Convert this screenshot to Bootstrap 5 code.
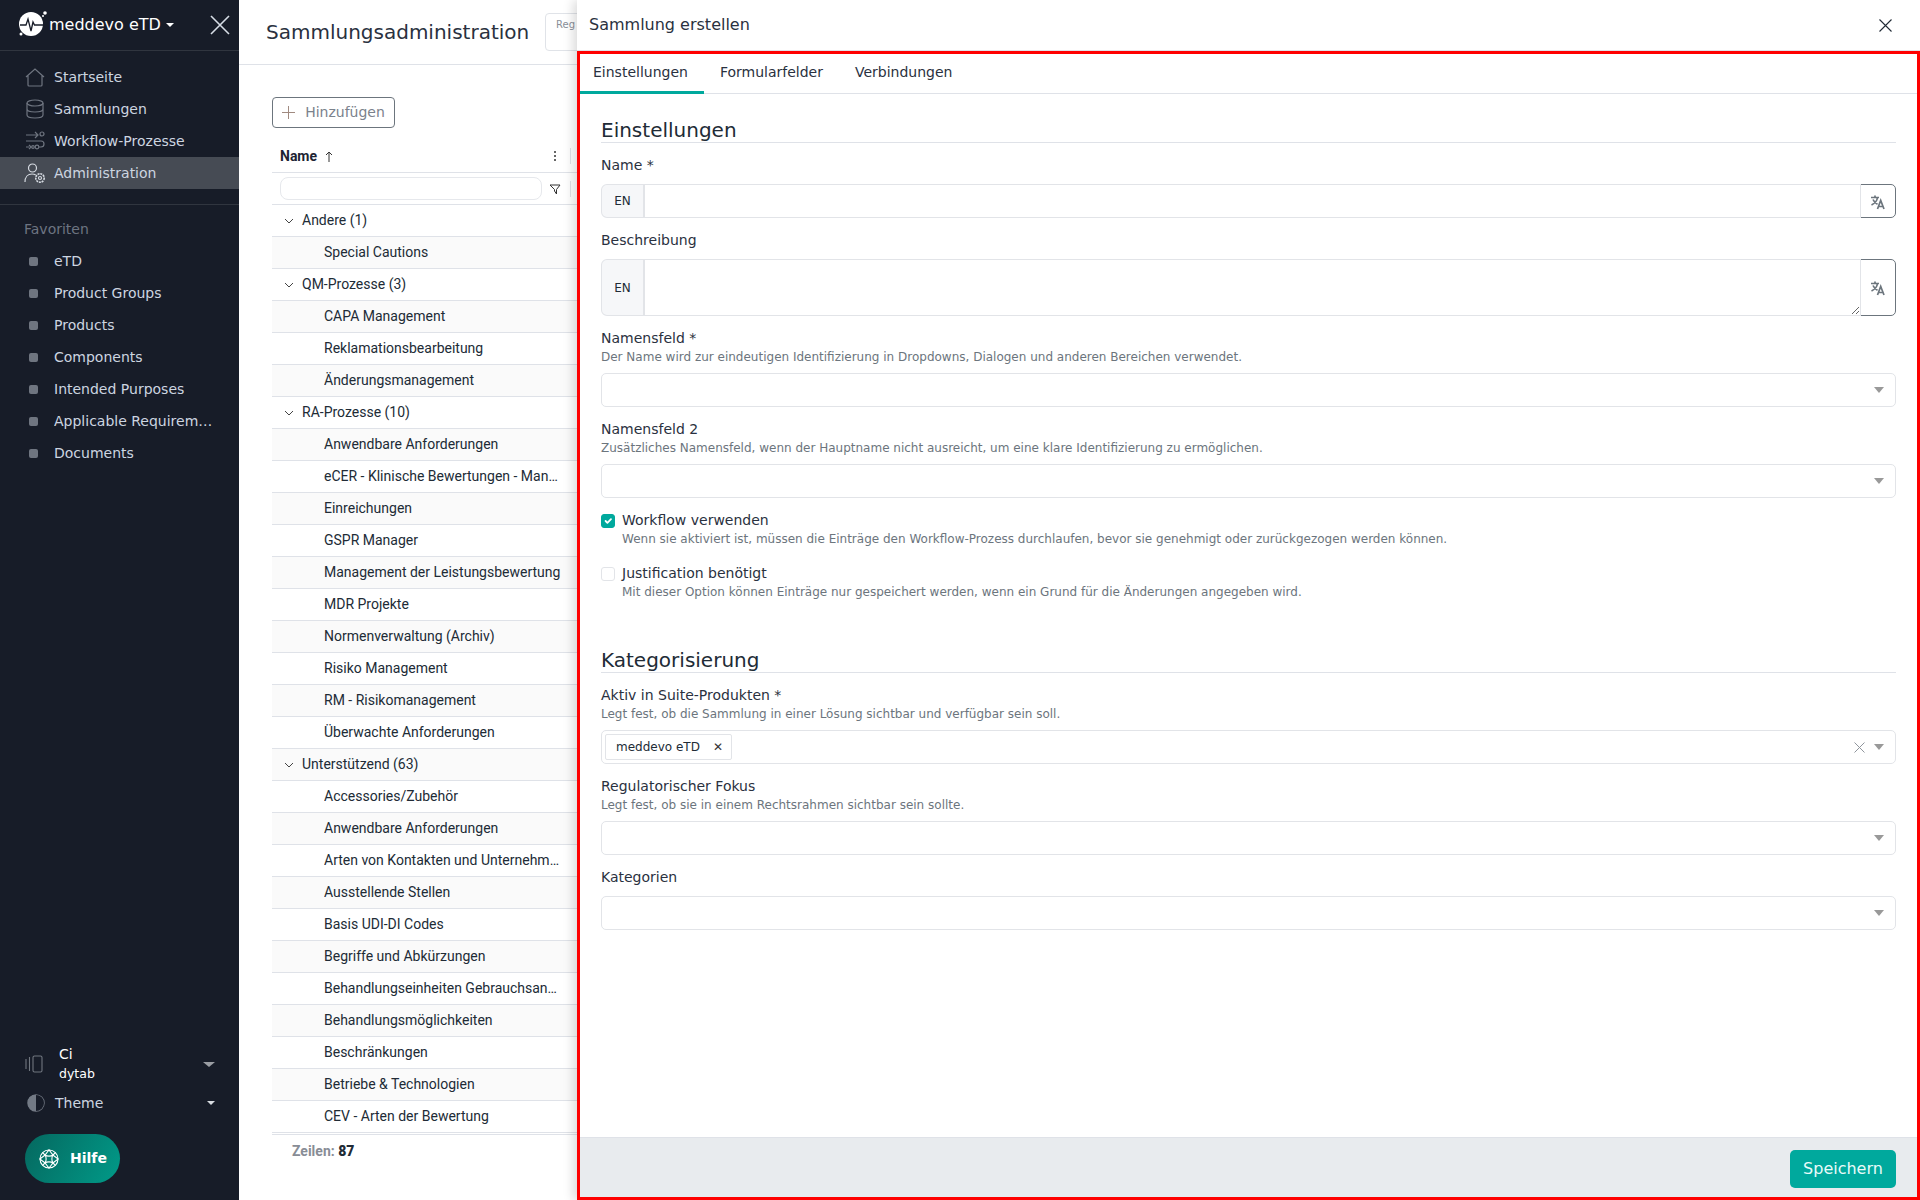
<!DOCTYPE html>
<html lang="de">
<head>
<meta charset="utf-8">
<title>Sammlungsadministration</title>
<link href="https://cdn.jsdelivr.net/npm/bootstrap@5.3.0/dist/css/bootstrap.min.css" rel="stylesheet">
<style>
html,body{height:1200px;overflow:hidden}
body{font-family:"DejaVu Sans",sans-serif;font-size:14px;color:#212b36;background:#fff}
.shell{height:1200px;position:relative;overflow:hidden}
.side{width:239px;flex:none;background:#171c28;color:#cdd5e0;height:1200px}
.brandbar{height:51px;border-bottom:1px solid #30353f;padding-left:19px;padding-right:9px}
.brandname{font-size:16px;color:#fff}
.caretw{display:inline-block;border-left:4px solid transparent;border-right:4px solid transparent;border-top:4px solid #fff;margin-left:5px;vertical-align:3px}
.mainnav{padding-top:10px;padding-bottom:15px;border-bottom:1px solid #30353f}
.navrow{height:32px;padding-left:24px;gap:8px;color:#cdd5e0;font-size:14px}
.navrow.sel{background:#464b54}
.navrow svg{width:22px;height:22px;flex:none}
.favh{color:#6d7481;font-size:14px;padding:16px 0 7px 24px;line-height:17px}
.favrow{height:32px;padding-left:29px;gap:11px;color:#cdd5e0;font-size:14px}
.sq{width:9px;height:9px;background:#6f7580;border-radius:2px;flex:none;margin-right:5px}
.favtext{width:160px}
.ci{padding-left:25px;padding-right:24px;height:44px;margin-bottom:2px;margin-top:-2px}
.ci b{font-weight:400;color:#fff;font-size:14px;line-height:19px;display:block}
.ci b+b{font-size:12.500px}
.cicaret{border-left:6px solid transparent;border-right:6px solid transparent;border-top:5px solid #9a9da3}
.cicaret.lite{border-top-color:#d7dbe0;border-left-width:4px;border-right-width:4px;border-top-width:4px}
.theme{padding-left:27px;padding-right:24px;height:30px;font-size:14px;gap:10px}
.helpbtn{width:95px;height:49px;margin:16px 0 17px 25px;border-radius:25px;background:linear-gradient(120deg,#05685f,#019a88);color:#fff;font-weight:700;font-size:14px;border:0;gap:11px;padding:0 0 0 14px}
.content{flex:1;min-width:0}
.pagehead{height:65px;border-bottom:1px solid #dfe2e8;padding-left:27px}
.pagehead h1{font-size:20px;font-weight:400;margin:0;width:279px;color:#2a3140;white-space:nowrap}
.regbox{width:200px;height:38px;border:1px solid #e0e3e8;border-radius:4px;font-size:10px;color:#8a8f98;padding:3px 0 0 10px;margin-top:-1px;white-space:nowrap;overflow:hidden}
.work{padding:32px 0 0 33px}
.addbtn{width:123px;height:31px;padding:0;border:1px solid #6c757d;border-radius:4px;color:#7b828c;font-size:14px;background:#fff;gap:10px}
.grid{width:305px;font-family:Roboto,sans-serif;font-size:14px;margin-top:12px;color:#212b36}
.ghead{height:33px;border-bottom:1px solid #dfe2e8;font-weight:700;padding-left:8px;font-size:14px;color:#1d2433}
.gfilter{height:32px;border-bottom:1px solid #dfe2e8;padding-left:8px}
.gfilter i{display:block;width:262px;height:23px;border:1px solid #e6e8ec;border-radius:8px}
.vsep{width:1px;height:16px;background:#dfe2e8;margin:0 6px 0 9px}
.gicon{margin-left:auto}
.grow{height:32px;border-bottom:1px solid #dfe2e8;padding-left:52px}
.grow:nth-child(even){background:#fafafa}
.grow span{width:238px}
.grow.grp{padding-left:12px;gap:8px}
.gtable{height:928px;overflow:hidden}
.gfoot{font-size:14px;font-weight:700;color:#888d96;padding:6px 0 0 20px;margin-top:1px;border-top:1px solid #dfe2e8}
.gfoot b{color:#212b36}
.panel{position:absolute;left:577px;top:0;right:0;bottom:0;background:#fff;box-shadow:-4px 0 10px rgba(0,0,0,.14)}
.panelhead{height:51px;padding:0 28px 0 12px;font-size:16px;color:#2a3140;border-bottom:1px solid #dfe2e8}
.panelframe{border:3px solid #f00;height:1149px}
.tabsbar{height:40px;border-bottom:1px solid #dfe2e8}
.tabsbar .nav-link{color:#2a3140;font-size:14px;padding:0 16px;height:40px;line-height:37px;border:0;border-radius:0;background:none}
.tabsbar .nav-item:first-child .nav-link{padding-left:13px}
.tabsbar .nav-link.active{border-bottom:3px solid #00a99d;color:#2a3140}
.formarea{padding:23px 21px 0 21px}
.sec{font-size:20px;font-weight:400;color:#212b36;line-height:27px;border-bottom:1px solid #dfe2e8;margin:0 0 13px;padding-bottom:0;height:26px}
.seccat{margin-top:46px}
.lbl{font-size:14px;color:#2a3140;line-height:18px;margin:0 0 10px;display:block}
.lbl.withhelp{margin-bottom:1px}
.hint{font-size:12px;color:#6c757d;line-height:18px;margin-bottom:7px}
.langgrp{margin-bottom:13px}
.langgrp .input-group-text{width:44px;padding:0;justify-content:center;font-size:12px;background:#f6f7f9;border-color:#e2e4e8;border-width:1px 2px 1px 1px;color:#212b36;border-radius:6px 0 0 6px}
.langgrp .form-control{height:34px;border-color:#e2e4e8;border-radius:0;box-shadow:none}
.langgrp textarea.form-control{height:57px}
.langbtn{width:36px;padding:0;border:1px solid #6c757d;border-radius:0 5px 5px 0;background:#fff;margin-left:-1px}
.sel2{height:34px;border-color:#e2e4e8;border-radius:5px;margin-bottom:13px;background-image:url("data:image/svg+xml,%3Csvg xmlns='http://www.w3.org/2000/svg' width='10' height='6'%3E%3Cpath d='M0 0h10L5 6z' fill='%23999'/%3E%3C/svg%3E");background-size:10px 6px;background-position:right 11px center}
.chk{margin-bottom:0;padding-left:21px;min-height:0}
.chk .form-check-input{width:14px;height:14px;margin-top:3px;margin-left:-21px;border-color:#e2e4e8;border-radius:3px}
.chk .form-check-input:checked{background-color:#00a99d;border-color:#00a99d}
.chk label{font-size:14px;color:#2a3140;line-height:18px;display:block}
.chk .hint{margin-bottom:16px;margin-top:1px}
.multi{height:34px;border:1px solid #e2e4e8;border-radius:5px;padding:0 11px 0 3px;margin-bottom:13px}
.chip{border:1px solid #e2e4e8;border-radius:2px;height:26px;padding:0 8px 0 10px;font-size:12px;gap:13px}
.chipx{font-size:12px;line-height:1;color:#333}
.multiend{margin-left:auto;gap:9px}
.tri{border-left:5px solid transparent;border-right:5px solid transparent;border-top:6px solid #999;display:block}
.panelfoot{position:absolute;left:3px;right:3px;bottom:3px;height:60px;background:#e8ebee;border-top:1px solid #dfe2e8;padding:3px 21px 0 0}
.savebtn{width:106px;height:38px;background:#00a99d;border:0;color:#e8fbf9;font-size:16px;border-radius:5px;padding:0}
</style>
</head>
<body>
<div class="shell d-flex">
  <aside class="side d-flex flex-column">
    <div class="brandbar d-flex align-items-center justify-content-between">
      <div class="d-flex align-items-center">
        <svg width="30" height="30" viewBox="0 0 30 30"><circle cx="12" cy="14" r="12" fill="#fff"/><path d="M1 15h6l2-6 3 12 2-9 1.500 3h9" fill="none" stroke="#171c28" stroke-width="1.300"/><circle cx="26" cy="3" r="1.800" fill="#fff"/><circle cx="2" cy="24" r="1.500" fill="#fff"/><circle cx="24" cy="6" r="1" fill="#fff"/></svg>
        <span class="brandname">meddevo eTD<span class="caretw"></span></span>
      </div>
      <svg width="20" height="20" viewBox="0 0 20 20"><path d="M1 1l18 18M19 1L1 19" stroke="#d7dde6" stroke-width="1.600" fill="none"/></svg>
    </div>
    <div class="mainnav">
      <div class="navrow d-flex align-items-center"><svg viewBox="0 0 22 22" fill="none" stroke="#6f7580" stroke-width="1.200"><path d="M2 11l9-8 9 8M4 9v10a1 1 0 0 0 1 1h12a1 1 0 0 0 1-1V9"/></svg>Startseite</div>
      <div class="navrow d-flex align-items-center"><svg viewBox="0 0 22 22" fill="none" stroke="#6f7580" stroke-width="1.200"><ellipse cx="11" cy="5" rx="8" ry="3"/><path d="M3 5v12c0 1.700 3.600 3 8 3s8-1.300 8-3V5M3 11c0 1.700 3.600 3 8 3s8-1.300 8-3"/></svg>Sammlungen</div>
      <div class="navrow d-flex align-items-center"><svg viewBox="0 0 22 22" fill="none" stroke="#6f7580" stroke-width="1.200"><path d="M2 5h12M11 2l3 3-3 3M2 17h3M5 15l2 2-2 2"/><circle cx="18" cy="4" r="2"/><path d="M2 11h15a3 3 0 0 1 0 6h-2"/><circle cx="13" cy="17" r="1.800"/><circle cx="9" cy="17" r="1.300"/></svg>Workflow-Prozesse</div>
      <div class="navrow sel d-flex align-items-center"><svg viewBox="0 0 22 22" fill="none" stroke="#d6dbe2" stroke-width="1.200"><circle cx="8.500" cy="6" r="4"/><path d="M1 20c0-5 3-8 7-8 1.500 0 2.700.3 3.700 1"/><circle cx="16" cy="16" r="4.200" stroke-dasharray="2 .8" stroke-width="1.600"/><circle cx="16" cy="16" r="1.500"/></svg>Administration</div>
    </div>
    <div class="favh">Favoriten</div>
    <div class="favrow d-flex align-items-center"><span class="sq"></span>eTD</div>
    <div class="favrow d-flex align-items-center"><span class="sq"></span>Product Groups</div>
    <div class="favrow d-flex align-items-center"><span class="sq"></span>Products</div>
    <div class="favrow d-flex align-items-center"><span class="sq"></span>Components</div>
    <div class="favrow d-flex align-items-center"><span class="sq"></span>Intended Purposes</div>
    <div class="favrow d-flex align-items-center"><span class="sq"></span><span class="favtext text-truncate">Applicable Requirements</span></div>
    <div class="favrow d-flex align-items-center"><span class="sq"></span>Documents</div>
    <div class="mt-auto"></div>
    <div class="ci d-flex align-items-center">
      <svg width="18" height="18" viewBox="0 0 18 18" fill="none" stroke="#70767f" stroke-width="1.100"><rect x="8" y="1" width="9" height="16" rx="1.500"/><path d="M1 4v10M4.500 2v14"/></svg>
      <div class="ms-3"><b>Ci</b><b>dytab</b></div>
      <span class="cicaret ms-auto"></span>
    </div>
    <div class="theme d-flex align-items-center">
      <svg width="18" height="18" viewBox="0 0 18 18"><circle cx="9" cy="9" r="8" fill="#d7dbe0" stroke="#737a85" stroke-width="1.500"/><path d="M9 1a8 8 0 0 0 0 16z" fill="#737a85"/><path d="M9 1a8 8 0 0 1 0 16z" fill="#171c28"/></svg>
      <span>Theme</span>
      <span class="cicaret lite ms-auto"></span>
    </div>
    <button class="helpbtn d-flex align-items-center" type="button">
      <svg width="20" height="20" viewBox="0 0 20 20" fill="none" stroke="#fff" stroke-width="1.100"><circle cx="10" cy="10" r="9"/><path d="M10 1c2 2 2 3 4 5s3 2 5 4c-2 2-3 2-5 4s-2 3-4 5c-2-2-2-3-4-5s-3-2-5-4c2-2 3-2 5-4s2-3 4-5z"/><path d="M3.600 3.600L6 6M16.400 3.600L14 6M3.600 16.400L6 14M16.400 16.400L14 14M6 6c2 1.500 6 1.500 8 0M6 14c2-1.500 6-1.500 8 0M6 6c1.500 2 1.500 6 0 8M14 6c-1.500 2-1.500 6 0 8"/></svg>
      Hilfe
    </button>
  </aside>

  <main class="content">
    <div class="pagehead d-flex align-items-center"><h1>Sammlungsadministration</h1><div class="regbox">Reg</div></div>
    <div class="work">
      <button class="addbtn d-flex align-items-center justify-content-center" type="button">
        <svg width="13" height="13" viewBox="0 0 13 13"><path d="M6.500 0v13M0 6.500h13" stroke="#a08a80" stroke-width="1"/></svg>Hinzufügen
      </button>
      <div class="grid">
        <div class="ghead d-flex align-items-center"><span>Name</span><svg class="ms-2" width="8" height="11" viewBox="0 0 8 11"><path d="M4 11V1M1 4l3-3 3 3" fill="none" stroke="#333" stroke-width="1"/></svg>
          <svg class="gicon" width="12" height="12" viewBox="0 0 12 12"><circle cx="6" cy="2" r="1" fill="#333"/><circle cx="6" cy="6" r="1" fill="#333"/><circle cx="6" cy="10" r="1" fill="#333"/></svg><span class="vsep"></span></div>
        <div class="gfilter d-flex align-items-center"><i></i>
          <svg class="gicon" width="12" height="12" viewBox="0 0 12 12"><path d="M1 2h10L7.500 6.500V11L5.500 8V6.500z" fill="none" stroke="#333"/></svg><span class="vsep"></span></div>
        <div class="gtable">
          <div class="grow grp d-flex align-items-center"><svg width="10" height="6" viewBox="0 0 10 6"><path d="M1 1l4 4 4-4" fill="none" stroke="#444"/></svg>Andere (1)</div>
          <div class="grow d-flex align-items-center"><span class="text-truncate">Special Cautions</span></div>
          <div class="grow grp d-flex align-items-center"><svg width="10" height="6" viewBox="0 0 10 6"><path d="M1 1l4 4 4-4" fill="none" stroke="#444"/></svg>QM-Prozesse (3)</div>
          <div class="grow d-flex align-items-center"><span class="text-truncate">CAPA Management</span></div>
          <div class="grow d-flex align-items-center"><span class="text-truncate">Reklamationsbearbeitung</span></div>
          <div class="grow d-flex align-items-center"><span class="text-truncate">Änderungsmanagement</span></div>
          <div class="grow grp d-flex align-items-center"><svg width="10" height="6" viewBox="0 0 10 6"><path d="M1 1l4 4 4-4" fill="none" stroke="#444"/></svg>RA-Prozesse (10)</div>
          <div class="grow d-flex align-items-center"><span class="text-truncate">Anwendbare Anforderungen</span></div>
          <div class="grow d-flex align-items-center"><span class="text-truncate">eCER - Klinische Bewertungen - Manager</span></div>
          <div class="grow d-flex align-items-center"><span class="text-truncate">Einreichungen</span></div>
          <div class="grow d-flex align-items-center"><span class="text-truncate">GSPR Manager</span></div>
          <div class="grow d-flex align-items-center"><span class="text-truncate">Management der Leistungsbewertung</span></div>
          <div class="grow d-flex align-items-center"><span class="text-truncate">MDR Projekte</span></div>
          <div class="grow d-flex align-items-center"><span class="text-truncate">Normenverwaltung (Archiv)</span></div>
          <div class="grow d-flex align-items-center"><span class="text-truncate">Risiko Management</span></div>
          <div class="grow d-flex align-items-center"><span class="text-truncate">RM - Risikomanagement</span></div>
          <div class="grow d-flex align-items-center"><span class="text-truncate">Überwachte Anforderungen</span></div>
          <div class="grow grp d-flex align-items-center"><svg width="10" height="6" viewBox="0 0 10 6"><path d="M1 1l4 4 4-4" fill="none" stroke="#444"/></svg>Unterstützend (63)</div>
          <div class="grow d-flex align-items-center"><span class="text-truncate">Accessories/Zubehör</span></div>
          <div class="grow d-flex align-items-center"><span class="text-truncate">Anwendbare Anforderungen</span></div>
          <div class="grow d-flex align-items-center"><span class="text-truncate">Arten von Kontakten und Unternehmen</span></div>
          <div class="grow d-flex align-items-center"><span class="text-truncate">Ausstellende Stellen</span></div>
          <div class="grow d-flex align-items-center"><span class="text-truncate">Basis UDI-DI Codes</span></div>
          <div class="grow d-flex align-items-center"><span class="text-truncate">Begriffe und Abkürzungen</span></div>
          <div class="grow d-flex align-items-center"><span class="text-truncate">Behandlungseinheiten Gebrauchsanweisung</span></div>
          <div class="grow d-flex align-items-center"><span class="text-truncate">Behandlungsmöglichkeiten</span></div>
          <div class="grow d-flex align-items-center"><span class="text-truncate">Beschränkungen</span></div>
          <div class="grow d-flex align-items-center"><span class="text-truncate">Betriebe &amp; Technologien</span></div>
          <div class="grow d-flex align-items-center"><span class="text-truncate">CEV - Arten der Bewertung</span></div>
        </div>
        <div class="gfoot">Zeilen: <b>87</b></div>
      </div>
    </div>
  </main>

  <section class="panel">
    <div class="panelhead d-flex align-items-center justify-content-between">
      <span>Sammlung erstellen</span>
      <svg width="13" height="13" viewBox="0 0 13 13"><path d="M.5.500l12 12M12.500.500l-12 12" stroke="#212b36" stroke-width="1.100" fill="none"/></svg>
    </div>
    <div class="panelframe">
      <ul class="nav tabsbar">
        <li class="nav-item"><a class="nav-link active" href="#">Einstellungen</a></li>
        <li class="nav-item"><a class="nav-link" href="#">Formularfelder</a></li>
        <li class="nav-item"><a class="nav-link" href="#">Verbindungen</a></li>
      </ul>
      <form class="formarea">
        <h2 class="sec">Einstellungen</h2>
        <label class="lbl">Name *</label>
        <div class="input-group langgrp">
          <span class="input-group-text">EN</span>
          <input class="form-control" type="text">
          <button class="langbtn" type="button"><svg width="16" height="16" viewBox="0 0 16 16" fill="none" stroke="#6c757d" stroke-width="1.700"><path d="M1 3.500h8M5 1.500v2M7.500 3.500C7 7 4.500 9.500 1.500 11M3 5.500c1 2.300 2.600 3.800 4.500 4.800"/><path d="M7.500 15l3.200-8.500L14 15M8.700 12.500h4"/></svg></button>
        </div>
        <label class="lbl">Beschreibung</label>
        <div class="input-group langgrp">
          <span class="input-group-text">EN</span>
          <textarea class="form-control"></textarea>
          <button class="langbtn" type="button"><svg width="16" height="16" viewBox="0 0 16 16" fill="none" stroke="#6c757d" stroke-width="1.700"><path d="M1 3.500h8M5 1.500v2M7.500 3.500C7 7 4.500 9.500 1.500 11M3 5.500c1 2.300 2.600 3.800 4.500 4.800"/><path d="M7.500 15l3.200-8.500L14 15M8.700 12.500h4"/></svg></button>
        </div>
        <label class="lbl withhelp">Namensfeld *</label>
        <div class="hint">Der Name wird zur eindeutigen Identifizierung in Dropdowns, Dialogen und anderen Bereichen verwendet.</div>
        <select class="form-select sel2"><option></option></select>
        <label class="lbl withhelp">Namensfeld 2</label>
        <div class="hint">Zusätzliches Namensfeld, wenn der Hauptname nicht ausreicht, um eine klare Identifizierung zu ermöglichen.</div>
        <select class="form-select sel2"><option></option></select>
        <div class="form-check chk">
          <input class="form-check-input" type="checkbox" checked id="c1">
          <label for="c1">Workflow verwenden</label>
          <div class="hint">Wenn sie aktiviert ist, müssen die Einträge den Workflow-Prozess durchlaufen, bevor sie genehmigt oder zurückgezogen werden können.</div>
        </div>
        <div class="form-check chk">
          <input class="form-check-input" type="checkbox" id="c2">
          <label for="c2">Justification benötigt</label>
          <div class="hint">Mit dieser Option können Einträge nur gespeichert werden, wenn ein Grund für die Änderungen angegeben wird.</div>
        </div>
        <h2 class="sec seccat">Kategorisierung</h2>
        <label class="lbl withhelp">Aktiv in Suite-Produkten *</label>
        <div class="hint">Legt fest, ob die Sammlung in einer Lösung sichtbar und verfügbar sein soll.</div>
        <div class="multi d-flex align-items-center">
          <span class="chip d-inline-flex align-items-center">meddevo eTD<span class="chipx">✕</span></span>
          <span class="multiend d-flex align-items-center"><svg width="11" height="11" viewBox="0 0 11 11"><path d="M.5.500l10 10M10.500.500l-10 10" stroke="#8f959c" fill="none"/></svg><span class="tri"></span></span>
        </div>
        <label class="lbl withhelp">Regulatorischer Fokus</label>
        <div class="hint">Legt fest, ob sie in einem Rechtsrahmen sichtbar sein sollte.</div>
        <select class="form-select sel2"><option></option></select>
        <label class="lbl">Kategorien</label>
        <select class="form-select sel2"><option></option></select>
      </form>
    </div>
    <div class="panelfoot d-flex align-items-center justify-content-end"><button class="savebtn" type="button">Speichern</button></div>
  </section>
</div>
</body>
</html>
